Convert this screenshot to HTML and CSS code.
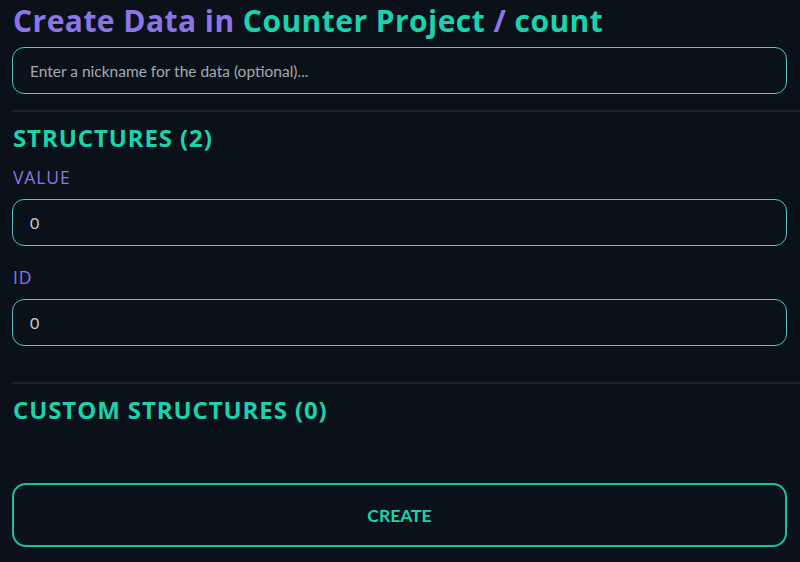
FILE: index.html
```html
<!DOCTYPE html>
<html>
<head>
<meta charset="utf-8">
<link rel="stylesheet" href="styles.css">
</head>
<body>
<div class="page">
  <h1 class="title"><span class="purple">Create Data in </span><span class="teal">Counter Project </span><span class="purple">/</span><span class="teal"> count</span></h1>
  <div class="field nick"><span class="placeholder">Enter a nickname for the data (optional)...</span></div>
  <div class="divider"></div>
  <h2 class="section">STRUCTURES (2)</h2>
  <div class="label">VALUE</div>
  <div class="field"><span class="value">0</span></div>
  <div class="label second">ID</div>
  <div class="field"><span class="value">0</span></div>
  <div class="divider lower"></div>
  <h2 class="section">CUSTOM STRUCTURES (0)</h2>
  <div class="button">CREATE</div>
</div>
</body>
</html>
```
FILE: styles.css
```css
html, body {
  margin: 0;
  padding: 0;
  background: #0a1118;
  overflow: hidden;
}
.page {
  padding: 0 13px 0 12px;
  display: flex;
  flex-direction: column;
}
.title {
  margin: 3px 0 0 1px;
  font-family: "Open Sans", sans-serif;
  font-weight: 700;
  font-size: 30px;
  line-height: 36px;
  letter-spacing: 0.45px;
}
.purple { color: #8b76e8; }
.teal { color: #1cd2ae; }
.field {
  box-sizing: border-box;
  margin-top: 11px;
  height: 47px;
  border: 1.5px solid #5cc0c4;
  border-radius: 12px;
  display: flex;
  align-items: center;
  padding-left: 17px;
  background: #0a1118;
}
.field.nick {
  margin-top: 8px;
}
.placeholder {
  font-family: "Lato", sans-serif;
  font-size: 15.5px;
  color: #a3aab3;
}
.value {
  font-family: "Lato", sans-serif;
  font-size: 16px;
  color: #c5cdd6;
}
.divider {
  margin-top: 16px;
  margin-right: -13px;
  height: 2px;
  background: #1c242a;
}
.divider.lower {
  margin-top: 36px;
}
.section {
  margin: 11px 0 0 1px;
  font-family: "Open Sans", sans-serif;
  font-weight: 700;
  font-size: 24px;
  line-height: 30px;
  letter-spacing: 0.9px;
  color: #1cd2ae;
}
.label {
  margin: 13px 0 0 1px;
  font-family: "Open Sans", sans-serif;
  font-size: 17.5px;
  line-height: 22px;
  letter-spacing: 0.9px;
  color: #8b76e8;
}
.label.second {
  margin-top: 20px;
}
.button {
  box-sizing: border-box;
  margin-top: 58px;
  height: 64px;
  border: 2px solid #1cbf9d;
  border-radius: 14px;
  display: flex;
  align-items: center;
  justify-content: center;
  font-family: "Lato", sans-serif;
  font-weight: 700;
  font-size: 17.5px;
  color: #1cd2ae;
}
```
